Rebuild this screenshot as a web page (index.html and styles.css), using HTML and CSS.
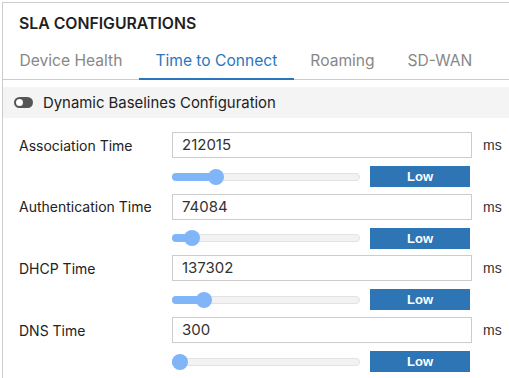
FILE: index.html
```html
<!DOCTYPE html>
<html lang="en">

<head>
    <meta charset="UTF-8">
    <meta name="viewport" content="width=device-width, initial-scale=1.0">
    <title>SLA Configurations</title>
    <link rel="stylesheet" href="styles.css">
</head>

<body>
    <div class="panel">
        <h2 class="title">SLA CONFIGURATIONS</h2>
        <nav class="tabs">
            <span class="tab">Device Health</span>
            <span class="tab active">Time to Connect</span>
            <span class="tab">Roaming</span>
            <span class="tab">SD-WAN</span>
        </nav>
        <div class="baseline-bar">
            <span class="toggle"></span>
            <span>Dynamic Baselines Configuration</span>
        </div>
        <div class="form">
            <div class="field">
                <label class="label">Association Time</label>
                <div class="input">212015</div>
                <span class="unit">ms</span>
                <div class="slider">
                    <div class="fill" style="width: 44px"></div>
                    <div class="thumb" style="left: 44px"></div>
                </div>
                <button class="level">Low</button>
            </div>
            <div class="field">
                <label class="label">Authentication Time</label>
                <div class="input">74084</div>
                <span class="unit">ms</span>
                <div class="slider">
                    <div class="fill" style="width: 20px"></div>
                    <div class="thumb" style="left: 20px"></div>
                </div>
                <button class="level">Low</button>
            </div>
            <div class="field">
                <label class="label">DHCP Time</label>
                <div class="input">137302</div>
                <span class="unit">ms</span>
                <div class="slider">
                    <div class="fill" style="width: 32px"></div>
                    <div class="thumb" style="left: 32px"></div>
                </div>
                <button class="level">Low</button>
            </div>
            <div class="field">
                <label class="label">DNS Time</label>
                <div class="input">300</div>
                <span class="unit">ms</span>
                <div class="slider">
                    <div class="fill" style="width: 8px"></div>
                    <div class="thumb" style="left: 8px"></div>
                </div>
                <button class="level">Low</button>
            </div>
        </div>
    </div>
</body>

</html>
```

FILE: styles.css
```css
* {
    margin: 0;
    padding: 0;
    box-sizing: border-box;
}

body {
    font-family: Inter, "Noto Sans", sans-serif;
    background-color: #fff;
    color: #222;
}

.panel {
    margin: 2px 0 0 2px;
    border-top: 1px solid #ccc;
    border-left: 1px solid #ccc;
    height: 376px;
}

.title {
    font-size: 15.8px;
    font-weight: 600;
    line-height: 20px;
    padding: 11px 16px 0;
    color: #1f1f1f;
}

.tabs {
    display: flex;
    margin-top: 17px;
    border-bottom: 1px solid #ccc;
}

.tab {
    padding: 0 16.5px 7px;
    font-size: 15.6px;
    line-height: 20px;
    color: #888;
    border-bottom: 2px solid transparent;
    margin-bottom: -1px;
}

.tab.active {
    color: #2a76bd;
    border-bottom-color: #2a76bd;
}

.baseline-bar {
    display: flex;
    align-items: center;
    gap: 10px;
    margin-top: 7px;
    height: 31px;
    padding-left: 11px;
    background-color: #f4f4f4;
    font-size: 14.9px;
    color: #222;
}

.toggle {
    position: relative;
    width: 19px;
    height: 11px;
    border-radius: 6px;
    background-color: #555;
}

.toggle::after {
    content: "";
    position: absolute;
    left: 2px;
    top: 2px;
    width: 7px;
    height: 7px;
    border-radius: 50%;
    background-color: #fff;
}

.form {
    padding: 14px 0 0 16px;
}

.field {
    display: grid;
    grid-template-columns: 153px 188px 10px 100px 2px 11px auto;
    grid-template-rows: 26px 21px;
    row-gap: 8px;
    margin-bottom: 6.7px;
    align-items: center;
}

.label {
    font-size: 14px;
    color: #222;
}

.input {
    grid-column: 2 / 6;
    height: 26px;
    border: 1px solid #ccc;
    padding-left: 9px;
    font-size: 15px;
    line-height: 24px;
    color: #333;
}

.unit {
    grid-column: 7;
    font-family: "Liberation Sans", Arial, sans-serif;
    font-size: 14px;
    line-height: 20px;
    color: #333;
}

.slider {
    grid-column: 2;
    grid-row: 2;
    position: relative;
    height: 8px;
    border: 1px solid #e2e2e2;
    border-radius: 4px;
    background-color: #f2f2f2;
}

.fill {
    position: absolute;
    left: -1px;
    top: -1px;
    height: 8px;
    border-radius: 4px;
    background-color: #80b5f7;
}

.thumb {
    position: absolute;
    top: 50%;
    width: 16px;
    height: 16px;
    margin: -8px 0 0 -9px;
    border-radius: 50%;
    background-color: #80b5f7;
}

.level {
    grid-column: 4;
    grid-row: 2;
    height: 21px;
    border: none;
    background-color: #2e75b6;
    color: #fff;
    font-family: "Liberation Sans", Arial, sans-serif;
    font-size: 13px;
    font-weight: bold;
}
```
